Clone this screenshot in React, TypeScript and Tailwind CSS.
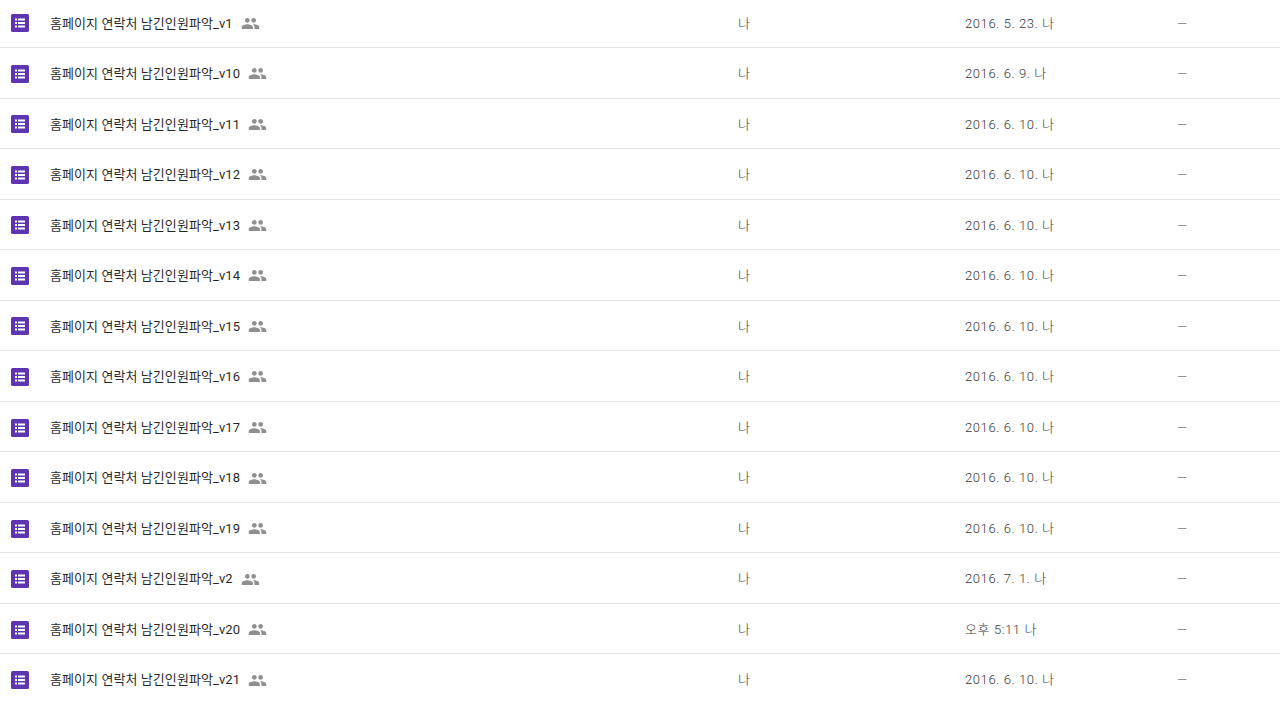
const files = [
  { version: "v1", modified: "2016. 5. 23." },
  { version: "v10", modified: "2016. 6. 9." },
  { version: "v11", modified: "2016. 6. 10." },
  { version: "v12", modified: "2016. 6. 10." },
  { version: "v13", modified: "2016. 6. 10." },
  { version: "v14", modified: "2016. 6. 10." },
  { version: "v15", modified: "2016. 6. 10." },
  { version: "v16", modified: "2016. 6. 10." },
  { version: "v17", modified: "2016. 6. 10." },
  { version: "v18", modified: "2016. 6. 10." },
  { version: "v19", modified: "2016. 6. 10." },
  { version: "v2", modified: "2016. 7. 1." },
  { version: "v20", modified: "오후 5:11" },
  { version: "v21", modified: "2016. 6. 10." },
];

function FormsIcon() {
  return (
    <svg width="18" height="18" viewBox="0 0 18 18" className="shrink-0">
      <rect width="18" height="18" rx="1.5" fill="#5e35b1" />
      <g fill="#fff">
        <rect x="4" y="4.5" width="2" height="2" />
        <rect x="7" y="4.5" width="7" height="2" />
        <rect x="4" y="8" width="2" height="2" />
        <rect x="7" y="8" width="7" height="2" />
        <rect x="4" y="11.5" width="2" height="2" />
        <rect x="7" y="11.5" width="7" height="2" />
      </g>
    </svg>
  );
}

function SharedIcon() {
  return (
    <svg width="19" height="19" viewBox="0 0 24 24" className="block shrink-0" fill="#8f8f8f">
      <path d="M16 11c1.66 0 2.99-1.34 2.99-3S17.66 5 16 5s-3 1.34-3 3 1.34 3 3 3zm-8 0c1.66 0 2.99-1.34 2.99-3S9.66 5 8 5 5 6.34 5 8s1.34 3 3 3zm0 2c-2.33 0-7 1.17-7 3.5V19h14v-2.5c0-2.33-4.67-3.5-7-3.5zm8 0c-.29 0-.62.02-.97.05 1.16.84 1.97 1.97 1.97 3.45V19h6v-2.5c0-2.33-4.67-3.5-7-3.5z" />
    </svg>
  );
}

export default function App() {
  return (
    <div className="h-[702px] overflow-hidden bg-white font-['Roboto','Noto_Sans_CJK_KR',sans-serif] text-[13px]">
      <div className="-mt-[2.5px]">
        {files.map((file) => (
          <div
            key={file.version}
            className="grid h-[50.54px] grid-cols-[738px_227px_212px_1fr] items-center border-b border-[#e4e4e4] pt-[2px]"
          >
            <div className="flex items-center pl-[11px]">
              <FormsIcon />
              <span className="ml-[21px] tracking-[0.07px] text-[#000] opacity-85">홈페이지 연락처 남긴인원파악_{file.version}</span>
              <span className="ml-[8px]">
                <SharedIcon />
              </span>
            </div>
            <div className="font-light text-[#000] opacity-80">나</div>
            <div className="font-light tracking-[0.6px] text-[#000] opacity-80">
              {file.modified} 나
            </div>
            <div className="font-light text-[#000] opacity-80">—</div>
          </div>
        ))}
      </div>
    </div>
  );
}
